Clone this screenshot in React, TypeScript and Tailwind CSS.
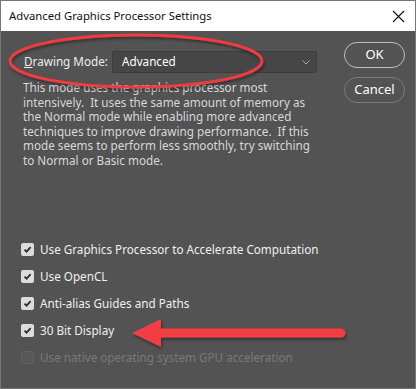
import React from 'react';

const options = [
  { label: 'Use Graphics Processor to Accelerate Computation', checked: true },
  { label: 'Use OpenCL', checked: true },
  { label: 'Anti-alias Guides and Paths', checked: true },
  { label: '30 Bit Display', checked: true },
  { label: 'Use native operating system GPU acceleration', checked: false, disabled: true },
];

const description = [
  'This mode uses the graphics processor most',
  'intensively.  It uses the same amount of memory as',
  'the Normal mode while enabling more advanced',
  'techniques to improve drawing performance.  If this',
  'mode seems to perform less smoothly, try switching',
  'to Normal or Basic mode.',
];

const Checkbox = ({ checked, disabled }: { checked: boolean; disabled?: boolean }) => (
  <div
    className={
      disabled
        ? 'w-[13px] h-[13px] rounded-[2px] bg-[#585858] border border-[#616161]'
        : 'w-[13px] h-[13px] rounded-[2px] bg-[#dcdcdc] flex items-center justify-center'
    }
  >
    {checked && (
      <svg width="9" height="9" viewBox="0 0 9 9">
        <path d="M1.5 4.6 L3.6 6.7 L7.6 2.2" fill="none" stroke="#2e2e2e" strokeWidth="1.8" />
      </svg>
    )}
  </div>
);

const App = () => {
  return (
    <div
      className="relative w-[416px] h-[389px] flex flex-col border border-[#767676] overflow-hidden"
      style={{ fontFamily: '"Noto Sans", "Open Sans", sans-serif' }}
    >
      {/* Title bar */}
      <div className="h-[30px] bg-white flex items-center justify-between pl-[8px] pr-[10px] shrink-0">
        <span className="text-[11.3px] text-[#111]">Advanced Graphics Processor Settings</span>
        <svg width="13" height="13" viewBox="0 0 13 13">
          <path d="M1 1 L12 12 M12 1 L1 12" stroke="#111" strokeWidth="1.1" />
        </svg>
      </div>

      {/* Body */}
      <div className="flex-1 bg-[#535353] flex flex-col">
        <div className="flex">
          <div className="pl-[22px] pt-[20px]">
            <div className="flex items-center h-[22px]">
              <span className="w-[89px] pl-[1px] text-[11.7px] text-[#ececec]">
                <span className="underline">D</span>rawing Mode:
              </span>
              <div className="w-[205px] h-[22px] bg-[#464646] border border-[#3c3c3c] rounded-[2px] flex items-center justify-between pl-[9px] pr-[6px]">
                <span className="text-[11.7px] text-white">Advanced</span>
                <svg width="8" height="5" viewBox="0 0 8 5">
                  <path d="M0.5 0.5 L4 4 L7.5 0.5" fill="none" stroke="#a8a8a8" strokeWidth="1" />
                </svg>
              </div>
            </div>
            <div className="mt-[7px] text-[11.7px] leading-[14.5px] text-[#d8d8d8] whitespace-pre">
              {description.map((line) => (
                <div key={line}>{line}</div>
              ))}
            </div>
          </div>
          <div className="ml-auto pt-[11px] pr-[10px] flex flex-col gap-[9px]">
            <button className="w-[61px] h-[26px] rounded-full border-[1.5px] border-[#bdbdbd] text-[13px] text-white">
              OK
            </button>
            <button className="w-[61px] h-[26px] rounded-full border border-[#7c7c7c] text-[13px] text-white">
              Cancel
            </button>
          </div>
        </div>

        <div className="mt-[69px] pl-[20px] flex flex-col">
          {options.map((opt) => (
            <div key={opt.label} className="h-[27px] flex items-center gap-[6px]">
              <Checkbox checked={opt.checked} disabled={opt.disabled} />
              <span className={opt.disabled ? 'text-[11.7px] text-[#797979]' : 'text-[11.7px] text-[#f0f0f0]'}>
                {opt.label}
              </span>
            </div>
          ))}
        </div>
      </div>

      {/* Annotations */}
      <svg className="absolute inset-0 pointer-events-none" width="416" height="389" viewBox="0 0 416 389">
        <defs>
          <filter id="sh" x="-10%" y="-30%" width="120%" height="160%">
            <feDropShadow dx="1" dy="2" stdDeviation="1.5" floodColor="#000" floodOpacity="0.45" />
          </filter>
        </defs>
        <ellipse cx="135" cy="60" rx="126" ry="26" fill="none" stroke="#f23b40" strokeWidth="3" filter="url(#sh)" />
        <g filter="url(#sh)">
          <line x1="158" y1="332" x2="340" y2="332" stroke="#f23e42" strokeWidth="9" strokeLinecap="round" />
          <polygon points="131,332 160,318 160,346" fill="#f23e42" />
        </g>
      </svg>
    </div>
  );
};

export default App;
